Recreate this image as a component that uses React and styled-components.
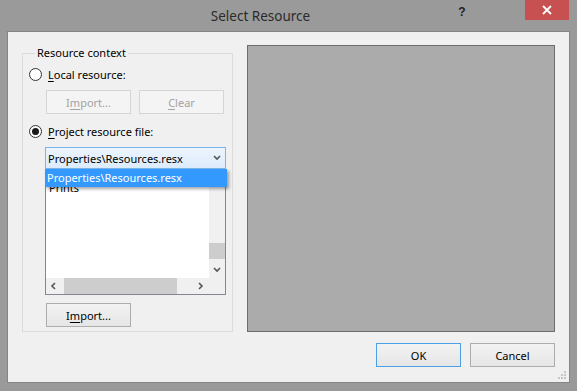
import React from 'react';
import styled, { createGlobalStyle } from 'styled-components';

const Global = createGlobalStyle`
  html, body {
    margin: 0;
    padding: 0;
    background: #9a9a9a;
  }
  body {
    font-family: "Noto Sans", "Liberation Sans", sans-serif;
    font-size: 11px;
    color: #000;
  }
  * { box-sizing: border-box; }
`;

const Window = styled.div`
  width: 577px;
  height: 391px;
  background: #9a9a9a;
  display: flex;
  flex-direction: column;
  padding: 0 7px 8px;
`;

const TitleBar = styled.div`
  height: 31px;
  position: relative;
  display: flex;
  align-items: center;
  justify-content: center;
  padding-right: 56px;
  flex-shrink: 0;
`;

const Title = styled.div`
  font-size: 13.5px;
  color: #2b2b2b;
  margin-top: 1px;
`;

const TitleButtons = styled.div`
  position: absolute;
  right: 1px;
  top: 0;
  display: flex;
  align-items: flex-start;
`;

const Help = styled.div`
  font-family: "Liberation Sans", sans-serif;
  font-weight: bold;
  font-size: 12px;
  color: #222;
  width: 20px;
  margin-right: 53px;
  margin-top: 5px;
  text-align: center;
`;

const Close = styled.div`
  width: 44px;
  height: 20px;
  background: #c75050;
  display: flex;
  align-items: center;
  justify-content: center;
`;

const Client = styled.div`
  flex: 1;
  background: #f0f0f0;
  border: 1px solid #858585;
  display: flex;
  flex-direction: column;
  padding: 13px 14px 15px;
  position: relative;
`;

const Body = styled.div`
  display: flex;
  gap: 14px;
  height: 287px;
`;

const Group = styled.fieldset`
  width: 211px;
  margin: 0;
  border: 1px solid #dcdcdc;
  padding: 0 0 3px 6px;
  display: flex;
  flex-direction: column;
`;

const Legend = styled.legend`
  padding: 0 2px;
  margin-left: 6px;
  line-height: 16px;
`;

const RadioRow = styled.label`
  display: flex;
  align-items: center;
  height: 16px;
  margin-top: ${p => p.$top}px;
  gap: 6px;
`;

const Radio = styled.span`
  width: 13px;
  height: 13px;
  border-radius: 50%;
  border: 1px solid #333;
  background: #fff;
  display: flex;
  align-items: center;
  justify-content: center;
  &::after {
    content: '';
    width: 7px;
    height: 7px;
    border-radius: 50%;
    background: ${p => (p.$checked ? '#1a1a1a' : 'transparent')};
  }
`;

const U = styled.span`
  text-decoration: underline;
  text-underline-offset: 2px;
`;

const ButtonRow = styled.div`
  display: flex;
  gap: 8px;
  margin: ${p => p.$top}px 0 0 17px;
`;

const Button = styled.button`
  width: 85px;
  height: 24px;
  font-family: inherit;
  font-size: 11px;
  padding: 0;
  border: 1px solid ${p => (p.$disabled ? '#d5d5d5' : p.$default ? '#4aa0e6' : '#adadad')};
  background: ${p =>
    p.$disabled ? '#f4f4f4' : 'linear-gradient(#f2f2f2, #e6e6e6)'};
  color: ${p => (p.$disabled ? '#a3a3a3' : '#000')};
`;

const ComboWrap = styled.div`
  position: relative;
  width: 181px;
  margin: 8px 0 0 16px;
`;

const Combo = styled.div`
  height: 22px;
  border: 1px solid #7eb4ea;
  background: linear-gradient(#ecf4fc, #dcecfc);
  display: flex;
  align-items: center;
  justify-content: space-between;
  padding: 0 4px 0 2px;
`;

const DropList = styled.div`
  position: absolute;
  top: 22px;
  left: 0;
  width: 182px;
  height: 18px;
  background: #3399ff;
  color: #fff;
  padding-left: 2px;
  line-height: 17px;
  box-shadow: 2px 2px 3px rgba(0, 0, 0, 0.35);
  z-index: 2;
`;

const ListBox = styled.div`
  width: 181px;
  height: 120px;
  margin: 6px 0 0 16px;
  border: 1px solid #828790;
  background: #fff;
  display: grid;
  grid-template-columns: 1fr 16px;
  grid-template-rows: 1fr 16px;
`;

const ListItems = styled.div`
  padding: 4px 3px;
  line-height: 16px;
  overflow: hidden;
`;

const VScroll = styled.div`
  background: #f0f0f0;
  display: flex;
  flex-direction: column;
  align-items: center;
`;

const HScroll = styled.div`
  background: #f0f0f0;
  display: flex;
  align-items: center;
`;

const Arrow = styled.div`
  width: 16px;
  height: 16px;
  display: flex;
  align-items: center;
  justify-content: center;
  flex-shrink: 0;
`;

const VTrack = styled.div`
  flex: 1;
  width: 100%;
  display: flex;
  flex-direction: column;
  justify-content: flex-end;
  padding-bottom: 3px;
`;

const VThumb = styled.div`
  height: 16px;
  width: 100%;
  background: #cdcdcd;
`;

const HThumb = styled.div`
  height: 100%;
  width: 113px;
  background: #cdcdcd;
  margin-left: 2px;
`;

const Corner = styled.div`
  background: #f0f0f0;
`;

const Preview = styled.div`
  flex: 1;
  background: #ababab;
  border: 1px solid #6d6d6d;
`;

const Footer = styled.div`
  display: flex;
  justify-content: flex-end;
  gap: 9px;
  margin-top: 11px;
`;

const Grip = styled.svg`
  position: absolute;
  right: 2px;
  bottom: 2px;
`;

const Chevron = ({ dir = 'down', color = '#444' }) => {
  const paths = {
    down: 'M1 2 L4 5 L7 2',
    up: 'M1 5 L4 2 L7 5',
    left: 'M5 1 L2 4 L5 7',
    right: 'M2 1 L5 4 L2 7',
  };
  return (
    <svg width="8" height="8" viewBox="0 0 8 8">
      <path d={paths[dir]} fill="none" stroke={color} strokeWidth="1.6" />
    </svg>
  );
};

const App = () => (
  <>
    <Global />
    <Window>
      <TitleBar>
        <Title>Select Resource</Title>
        <TitleButtons>
          <Help>?</Help>
          <Close>
            <svg width="10" height="10" viewBox="0 0 10 10">
              <path d="M1 1 L9 9 M9 1 L1 9" stroke="#fff" strokeWidth="1.8" />
            </svg>
          </Close>
        </TitleButtons>
      </TitleBar>
      <Client>
        <Body>
          <Group>
            <Legend>Resource context</Legend>
            <RadioRow $top={5}>
              <Radio />
              <span><U>L</U>ocal resource:</span>
            </RadioRow>
            <ButtonRow $top={8}>
              <Button $disabled>I<U>m</U>port...</Button>
              <Button $disabled><U>C</U>lear</Button>
            </ButtonRow>
            <RadioRow $top={9}>
              <Radio $checked />
              <span><U>P</U>roject resource file:</span>
            </RadioRow>
            <ComboWrap>
              <Combo>
                <span>Properties\Resources.resx</span>
                <Chevron dir="down" color="#555" />
              </Combo>
              <DropList>Properties\Resources.resx</DropList>
            </ComboWrap>
            <ListBox>
              <ListItems>Prints</ListItems>
              <VScroll>
                <Arrow><Chevron dir="up" color="#555" /></Arrow>
                <VTrack>
                  <VThumb />
                </VTrack>
                <Arrow><Chevron dir="down" color="#555" /></Arrow>
              </VScroll>
              <HScroll>
                <Arrow><Chevron dir="left" color="#555" /></Arrow>
                <HThumb />
                <div style={{ flex: 1 }} />
                <Arrow><Chevron dir="right" color="#555" /></Arrow>
              </HScroll>
              <Corner />
            </ListBox>
            <ButtonRow $top={8}>
              <Button>I<U>m</U>port...</Button>
            </ButtonRow>
          </Group>
          <Preview />
        </Body>
        <Footer>
          <Button $default>OK</Button>
          <Button>Cancel</Button>
        </Footer>
        <Grip width="10" height="10" viewBox="0 0 10 10">
          {[[8, 2], [8, 5], [8, 8], [5, 5], [5, 8], [2, 8]].map(([x, y]) => (
            <rect key={`${x}-${y}`} x={x - 1} y={y - 1} width="2" height="2" fill="#c6c6c6" />
          ))}
        </Grip>
      </Client>
    </Window>
  </>
);

export default App;
